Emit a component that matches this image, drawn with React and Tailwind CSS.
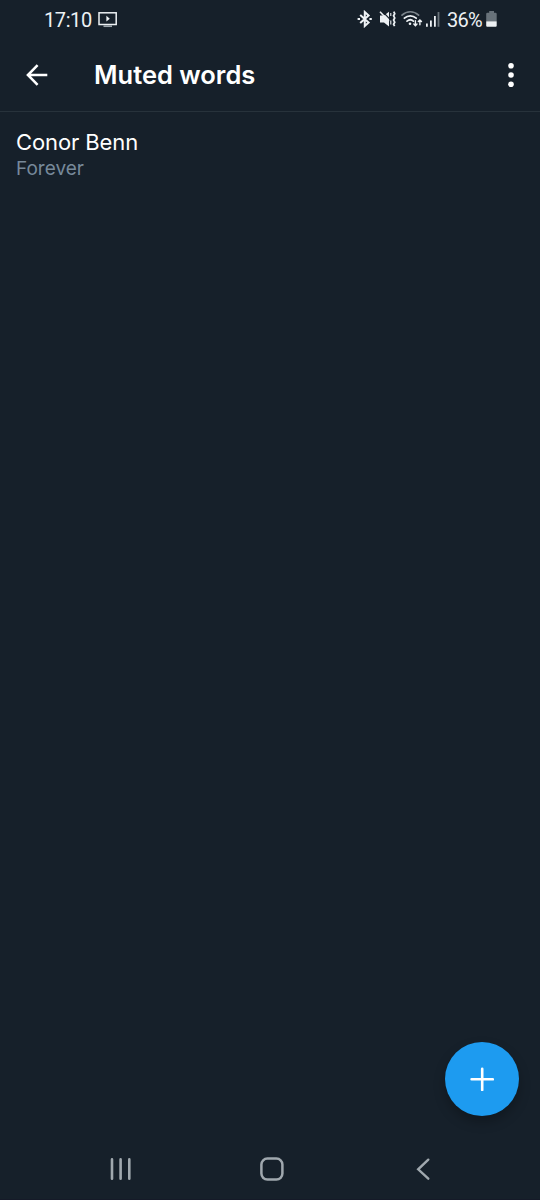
const MUTED_WORDS = [{ word: 'Conor Benn', duration: 'Forever' }];

function CastIcon() {
  return (
    <svg width="20" height="17" viewBox="0 0 20 17" fill="none" className="ml-[6px]">
      <rect x="1" y="1.8" width="17.2" height="11.7" stroke="#edf1f4" strokeWidth="1.5" />
      <path d="M8.4 4.8v5.8l3.4-2.9z" fill="#edf1f4" />
      <path d="M5.5 15.2h8.5" stroke="#9da6ad" strokeWidth="1.7" />
    </svg>
  );
}

function BluetoothIcon() {
  return (
    <svg width="16" height="18" viewBox="0 0 16 18" fill="none" stroke="#edf1f4" strokeWidth="2">
      <path d="M3.2 5.1l8.4 7.5-3.8 3.4V2l3.8 3.4-8.4 7.5" />
      <path d="M.6 9h2.4M12.4 9h2.4" strokeWidth="2.2" />
    </svg>
  );
}

function VibrateIcon() {
  return (
    <svg width="18" height="18" viewBox="0 0 18 18" fill="none" className="ml-[6px]">
      <path d="M1 5.4h4l5-3.6v14.6L5 12.4H1z" fill="#edf1f4" />
      <path d="M3.4 1.4l7 7.2" stroke="#16202a" strokeWidth="1.3" />
      <path d="M1 1.8l9 9.4" stroke="#edf1f4" strokeWidth="1.6" />
      <path d="M11.8 3v3M11.8 10.5v4" stroke="#edf1f4" strokeWidth="1.1" />
      <path d="M14.8 1.6l.9 2.1-1.1 2.1 1.1 2.1-1.1 2.2 1.1 2.1-1.1 2.1 1 1.9" stroke="#edf1f4" strokeWidth="1.8" />
    </svg>
  );
}

function WifiIcon() {
  return (
    <svg width="22" height="18" viewBox="0 0 22 18" fill="none" strokeLinecap="round" className="ml-[4px]">
      <path d="M1 5.1c4.9-4.5 11.7-4.5 16.6 0" stroke="#7b848b" strokeWidth="1.7" />
      <path d="M3.4 8.2c3.5-3.2 8.3-3.2 11.8 0" stroke="#edf1f4" strokeWidth="1.8" />
      <path d="M6 11.1c2-1.6 4.6-1.6 6.4 0" stroke="#edf1f4" strokeWidth="1.7" />
      <circle cx="9" cy="13.8" r="1.3" fill="#edf1f4" />
      <path d="M14.4 10.8v4.6M12.8 14l1.6 1.7 1.6-1.7M18.9 14.8v-4.6M17.3 11.6l1.6-1.7 1.6 1.7" stroke="#edf1f4" strokeWidth="1.4" />
    </svg>
  );
}

function SignalIcon() {
  return (
    <svg width="16" height="18" viewBox="0 0 16 18" className="ml-[2px]">
      <path d="M1 13.4h1.8v3.4H1zM5 10.4h1.8v6.4H5zM9 6h1.8v10.8H9z" fill="#edf1f4" />
      <path d="M12.6 2h1.8v14.8h-1.8z" fill="#68727a" />
    </svg>
  );
}

function BatteryIcon() {
  return (
    <svg width="12" height="18" viewBox="0 0 12 18" className="ml-[2px]">
      <path d="M3.2 1h4.8v1.7h1.5q1.2 0 1.2 1.2v7H.2v-7q0-1.2 1.2-1.2h1.8z" fill="#68727a" />
      <path d="M.2 11.3h10.5v4.5q0 1-1 1H1.2q-1 0-1-1z" fill="#edf1f4" />
    </svg>
  );
}

function StatusBar() {
  return (
    <div className="flex h-[39px] items-center justify-between pl-11 pr-[42px] font-['Roboto',sans-serif] text-[20px] text-[#edf1f4]">
      <div className="flex items-center">
        <span className="w-[48px] tracking-[-0.4px]">17:10</span>
        <CastIcon />
      </div>
      <div className="flex items-center">
        <div className="flex items-center pb-px">
          <BluetoothIcon />
          <VibrateIcon />
          <WifiIcon />
          <SignalIcon />
        </div>
        <span className="ml-[6px] w-[37px] tracking-[-0.7px]">36%</span>
        <div className="pb-px">
          <BatteryIcon />
        </div>
      </div>
    </div>
  );
}

function Header() {
  return (
    <header className="flex h-[73px] items-center border-b border-[#27323b] pl-[26px] pr-[25px]">
      <button type="button" aria-label="Back">
        <svg width="23" height="24" viewBox="0 0 23 24" fill="none" stroke="#fff" strokeWidth="2.5">
          <path d="M21.3 12H2M11.6 2.2L1.9 12l9.7 9.8" />
        </svg>
      </button>
      <h1 className="ml-[45px] flex-1 whitespace-nowrap text-[25.5px] font-semibold leading-8 text-white">
        Muted words
      </h1>
      <button type="button" aria-label="More options">
        <svg width="8" height="26" viewBox="0 0 8 26" fill="#fff">
          <circle cx="4" cy="3.8" r="2.8" />
          <circle cx="4" cy="13" r="2.8" />
          <circle cx="4" cy="22.2" r="2.8" />
        </svg>
      </button>
    </header>
  );
}

function NavBar() {
  return (
    <nav className="flex h-[62px] items-center border-b border-[#151a28] pl-[109px] text-[#a0a8ae]">
      <svg width="23" height="24" viewBox="0 0 23 24" fill="none" stroke="currentColor" strokeWidth="2.6" strokeLinecap="round">
        <path d="M3 2.4v19.4M11.6 2.4v19.4M20.3 2.4v19.4" />
      </svg>
      <svg width="24" height="24" viewBox="0 0 24 24" fill="none" stroke="currentColor" strokeWidth="2.5" className="ml-[128px]">
        <rect x="1.4" y="1.6" width="21" height="21" rx="6" />
      </svg>
      <svg width="15" height="24" viewBox="0 0 15 24" fill="none" stroke="currentColor" strokeWidth="2.4" strokeLinecap="round" className="ml-[132px]">
        <path d="M12.3 2.7L2.2 12.3l10.1 9.4" />
      </svg>
    </nav>
  );
}

export default function App() {
  return (
    <div className="relative flex h-[1200px] w-[540px] flex-col bg-[#16202a] font-['Inter',sans-serif]">
      <StatusBar />
      <Header />
      <main className="flex-1 px-4 pt-4">
        {MUTED_WORDS.map((item) => (
          <div key={item.word}>
            <p className="text-[22px] leading-[28px] tracking-[-0.1px] text-white">{item.word}</p>
            <p className="text-[19px] leading-[26px] text-[#76899a]">{item.duration}</p>
          </div>
        ))}
      </main>
      <NavBar />
      <button
        type="button"
        aria-label="Add muted word"
        className="absolute left-[445px] top-[1042px] flex h-[74px] w-[74px] items-center justify-center rounded-full bg-[#1d9bf0] shadow-[0_6px_12px_rgba(0,0,0,0.25)]"
      >
        <svg width="24" height="24" viewBox="0 0 24 24" stroke="#fff" strokeWidth="2.6" strokeLinecap="round">
          <path d="M12.2 1.7v21.2M1.6 12.3h21.2" />
        </svg>
      </button>
    </div>
  );
}
